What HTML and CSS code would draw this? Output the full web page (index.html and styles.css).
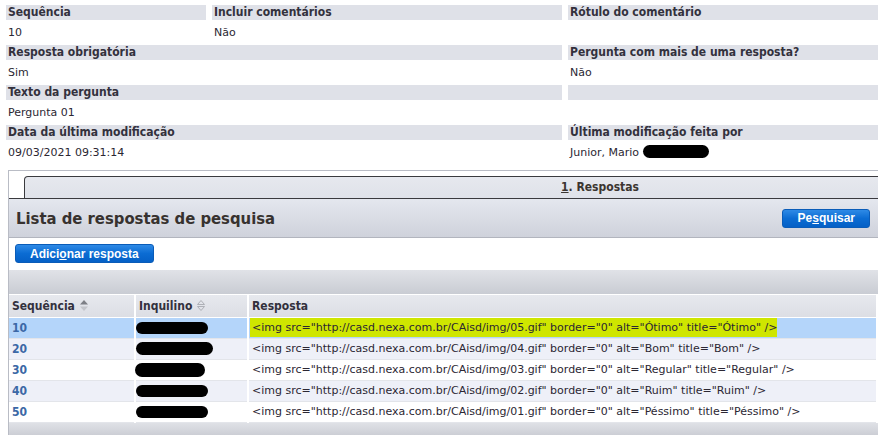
FILE: index.html
```html
<!DOCTYPE html>
<html lang="pt-BR">
<head>
  <meta charset="UTF-8" />
  <title>Pergunta da pesquisa</title>
  <link rel="stylesheet" href="styles.css">
</head>
<body>
  <div class="details">
    <div class="field"><div class="label">Sequência</div><div class="value">10</div></div>
    <div class="field"><div class="label">Incluir comentários</div><div class="value">Não</div></div>
    <div class="field"><div class="label">Rótulo do comentário</div><div class="value"></div></div>

    <div class="field wide"><div class="label">Resposta obrigatória</div><div class="value">Sim</div></div>
    <div class="field"><div class="label">Pergunta com mais de uma resposta?</div><div class="value">Não</div></div>

    <div class="field wide"><div class="label">Texto da pergunta</div><div class="value">Pergunta 01</div></div>
    <div class="field"><div class="label"></div><div class="value"></div></div>

    <div class="field wide"><div class="label">Data da última modificação</div><div class="value">09/03/2021 09:31:14</div></div>
    <div class="field"><div class="label">Última modificação feita por</div><div class="value">Junior, Mario <span class="redact redact-name"></span></div></div>
  </div>

  <div class="panel">
    <div class="tab-strip">
      <div class="tab"><u>1</u>. Respostas</div>
    </div>

    <div class="list-header">
      <h2>Lista de respostas de pesquisa</h2>
      <button class="btn">Pe<u>s</u>quisar</button>
    </div>

    <div class="toolbar">
      <button class="btn">Adici<u>o</u>nar resposta</button>
    </div>

    <div class="grid-bar"></div>

    <table class="answers">
      <thead>
        <tr>
          <th class="col-seq">Sequência
            <svg class="sort" width="10" height="13" viewBox="0 0 10 13"><path d="M5 1 L9 5.5 L1 5.5 Z" fill="#7d7f86"/><path d="M5 12 L9 7.5 L1 7.5 Z" fill="#c3c5cb"/></svg>
          </th>
          <th class="col-ten">Inquilino
            <svg class="sort" width="10" height="13" viewBox="0 0 10 13"><path d="M5 1.5 L8.5 5.5 L1.5 5.5 Z" fill="none" stroke="#aeb0b6"/><path d="M5 11.5 L8.5 7.5 L1.5 7.5 Z" fill="none" stroke="#aeb0b6"/></svg>
          </th>
          <th>Resposta</th>
        </tr>
      </thead>
      <tbody>
        <tr class="selected">
          <td class="seq">10</td>
          <td><span class="redact r1"></span></td>
          <td><span class="marker">&lt;img src="http://casd.nexa.com.br/CAisd/img/05.gif" border="0" alt="Ótimo" title="Ótimo" /&gt;</span></td>
        </tr>
        <tr class="alt">
          <td class="seq">20</td>
          <td><span class="redact r2"></span></td>
          <td>&lt;img src="http://casd.nexa.com.br/CAisd/img/04.gif" border="0" alt="Bom" title="Bom" /&gt;</td>
        </tr>
        <tr>
          <td class="seq">30</td>
          <td><span class="redact r3"></span></td>
          <td>&lt;img src="http://casd.nexa.com.br/CAisd/img/03.gif" border="0" alt="Regular" title="Regular" /&gt;</td>
        </tr>
        <tr class="alt">
          <td class="seq">40</td>
          <td><span class="redact r1"></span></td>
          <td>&lt;img src="http://casd.nexa.com.br/CAisd/img/02.gif" border="0" alt="Ruim" title="Ruim" /&gt;</td>
        </tr>
        <tr>
          <td class="seq">50</td>
          <td><span class="redact r1"></span></td>
          <td>&lt;img src="http://casd.nexa.com.br/CAisd/img/01.gif" border="0" alt="Péssimo" title="Péssimo" /&gt;</td>
        </tr>
      </tbody>
    </table>
    <div class="grid-foot"></div>
  </div>
</body>
</html>
```

FILE: styles.css
```css
* {
  box-sizing: border-box;
}

html, body {
  overflow: hidden;
}

body {
  margin: 0;
  font-family: "DejaVu Sans", Verdana, sans-serif;
  font-size: 11px;
  color: #2b2733;
  background: #fff;
}

/* campos do detalhe */
.details {
  display: grid;
  grid-template-columns: 200px 350px 1fr;
  column-gap: 6px;
  padding: 5px 0 0 6px;
}

.field.wide {
  grid-column: span 2;
}

.field .label {
  height: 15px;
  line-height: 15px;
  padding-left: 2px;
  background: #dfe1e8;
  font-family: "DejaVu Sans Condensed", "DejaVu Sans", sans-serif;
  font-weight: bold;
  font-size: 12px;
  color: #33313d;
  white-space: nowrap;
}

.field .value {
  height: 25px;
  line-height: 25px;
  padding-left: 2px;
  white-space: nowrap;
}

.redact {
  display: inline-block;
  background: #000;
  border-radius: 8px;
  vertical-align: middle;
}

.redact-name {
  width: 66px;
  height: 13px;
  margin-top: -3px;
}

/* painel com aba */
.panel {
  margin: 5px 0 0 8px;
  border-left: 1px solid #b9bcc5;
  border-top: 1px solid #b9bcc5;
}

.tab-strip {
  padding: 5px 0 0 15px;
  border-bottom: 1px solid #3a3a3e;
  overflow: hidden;
}

.tab {
  width: 1152px;
  height: 22px;
  line-height: 21px;
  text-align: center;
  border: 1px solid #3a3a3e;
  border-bottom: none;
  border-radius: 4px 0 0 0;
  background: linear-gradient(#e6e8ee, #dfe2e9);
  font-family: "DejaVu Sans Condensed", "DejaVu Sans", sans-serif;
  font-weight: bold;
  font-size: 12px;
  color: #3b3530;
}

.list-header {
  display: flex;
  align-items: center;
  justify-content: space-between;
  height: 39px;
  padding: 0 8px 0 7px;
  background: linear-gradient(#e4e7ee, #cfd2db);
  border-bottom: 1px solid #b2b5be;
}

.list-header h2 {
  margin: 0;
  font-family: "DejaVu Sans Condensed", "DejaVu Sans", sans-serif;
  font-size: 16.5px;
  font-weight: bold;
  color: #37322f;
}

.btn {
  height: 19px;
  padding: 0 14px;
  border: 1px solid #0a5cb8;
  border-radius: 3px;
  background: linear-gradient(#2e8ae6, #0b6cd3 50%, #0560c6);
  color: #fff;
  font-family: "Liberation Sans", Arial, sans-serif;
  font-weight: bold;
  font-size: 12px;
  line-height: 16px;
  white-space: nowrap;
  cursor: pointer;
}

.list-header .btn {
  padding: 0 14px 0 15px;
}

.toolbar {
  height: 32px;
  padding: 6px 0 0 6px;
}

.grid-bar {
  height: 25px;
  background: linear-gradient(#e0e2e7, #c9ccd3);
  border-bottom: 1px solid #fff;
}

/* tabela de respostas */
.answers {
  width: 100%;
  border-collapse: collapse;
  font-size: 11px;
}

.answers th {
  height: 22px;
  text-align: left;
  padding: 0 3px;
  background: linear-gradient(#e7e9ee, #dcdee4);
  border-right: 2px solid #fff;
  border-bottom: 1px solid #fff;
  font-family: "DejaVu Sans Condensed", "DejaVu Sans", sans-serif;
  font-weight: bold;
  font-size: 12px;
  color: #33313d;
  white-space: nowrap;
}

.answers th.col-seq {
  width: 126px;
}

.answers th.col-ten {
  width: 113px;
}

.sort {
  vertical-align: -2px;
}

.answers td {
  height: 21px;
  padding: 0 3px;
  border-right: 2px solid #fff;
  border-bottom: 1px solid #e3e5ea;
  white-space: nowrap;
  color: #2b2733;
}

.answers tr.alt td {
  background: #eef0f8;
}

.answers tr.selected td {
  background: #b4d5fa;
}

.answers td.seq {
  font-family: "DejaVu Sans Condensed", "DejaVu Sans", sans-serif;
  font-weight: bold;
  font-size: 12px;
  color: #3b68a6;
}

.answers .r1 { width: 72px; height: 12px; margin-left: -3px; }
.answers .r2 { width: 77px; height: 13px; margin-left: -3px; }
.answers .r3 { width: 70px; height: 14px; margin-left: -4px; }

.marker {
  background: #cfe600;
  padding: 3px 0 3px 2px;
  margin-left: -2px;
}

.grid-foot {
  height: 12px;
  background: linear-gradient(#dfe1e6, #ccced5);
}
```
